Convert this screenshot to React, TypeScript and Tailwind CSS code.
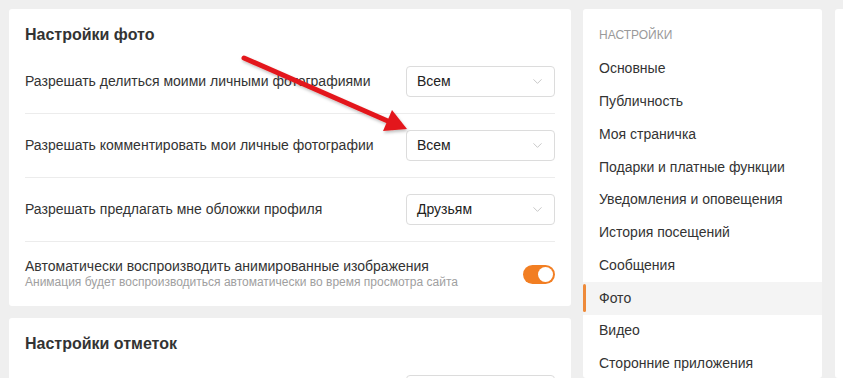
import { ChevronDown } from 'lucide-react';

const menu = [
  'Основные',
  'Публичность',
  'Моя страничка',
  'Подарки и платные функции',
  'Уведомления и оповещения',
  'История посещений',
  'Сообщения',
  'Фото',
  'Видео',
  'Сторонние приложения',
];

function Select({ value }: { value: string }) {
  return (
    <div className="flex h-[31px] w-[149px] shrink-0 items-center justify-between rounded-[4px] border border-[#dcdcdc] bg-white pl-[10px] pr-[9px] text-[14px] text-[#222]">
      <span>{value}</span>
      <ChevronDown size={15} strokeWidth={1.5} className="text-[#c4c4c4]" />
    </div>
  );
}

function SelectRow({ label, value }: { label: string; value: string }) {
  return (
    <div className="flex items-center justify-between border-b border-[#ececec] py-4">
      <span className="text-[14px] text-[#333]">{label}</span>
      <Select value={value} />
    </div>
  );
}

function Toggle() {
  return (
    <div className="flex h-[19px] w-[32px] shrink-0 items-center justify-end rounded-full bg-[#f27e22] pr-[2px]">
      <div className="h-[15px] w-[15px] rounded-full bg-white" />
    </div>
  );
}

function Arrow() {
  return (
    <svg
      className="pointer-events-none absolute left-0 top-0"
      width={843}
      height={378}
      viewBox="0 0 843 378"
    >
      <defs>
        <filter id="sh" x="-10%" y="-10%" width="120%" height="130%">
          <feDropShadow dx="1" dy="2" stdDeviation="1.5" floodColor="#000" floodOpacity="0.25" />
        </filter>
      </defs>
      <g filter="url(#sh)">
        <line x1={244} y1={58} x2={390} y2={122} stroke="#e3191b" strokeWidth={5} strokeLinecap="round" />
        <polygon points="407,129 383,131 392,110" fill="#e3191b" />
      </g>
    </svg>
  );
}

export default function App() {
  return (
    <div className="relative flex h-[378px] w-[843px] overflow-hidden bg-[#efefef] pl-[9px] pt-[9px] font-['Liberation_Sans',Arial,sans-serif]">
      {/* Main column */}
      <div className="flex w-[562px] shrink-0 flex-col gap-3">
        <div className="rounded-[3px] bg-white px-4 pt-[17px]">
          <h2 className="mb-[6px] text-[16px] font-bold leading-[18px] text-[#333]">Настройки фото</h2>
          <SelectRow label="Разрешать делиться моими личными фотографиями" value="Всем" />
          <SelectRow label="Разрешать комментировать мои личные фотографии" value="Всем" />
          <SelectRow label="Разрешать предлагать мне обложки профиля" value="Друзьям" />
          <div className="flex items-center justify-between pb-4 pt-4">
            <div className="flex flex-col">
              <span className="text-[14px] leading-[16px] text-[#333]">
                Автоматически воспроизводить анимированные изображения
              </span>
              <span className="text-[12px] leading-[16px] text-[#a0a0a0]">
                Анимация будет воспроизводиться автоматически во время просмотра сайта
              </span>
            </div>
            <Toggle />
          </div>
        </div>

        <div className="flex-1 rounded-[3px] bg-white px-4 pt-[17px]">
          <h2 className="mb-[6px] text-[16px] font-bold leading-[18px] text-[#333]">Настройки отметок</h2>
          <div className="flex justify-end pt-4">
            <div className="h-[31px] w-[149px] rounded-[4px] border border-[#dcdcdc]" />
          </div>
        </div>
      </div>

      {/* Settings menu */}
      <div className="ml-3 w-[239px] shrink-0 rounded-[3px] bg-white pt-[17px]">
        <div className="mb-[8.5px] pl-4 text-[12px] uppercase leading-[18px] text-[#9a9a9a]">Настройки</div>
        {menu.map((item) => {
          const active = item === 'Фото';
          return (
            <div
              key={item}
              className={`relative flex h-[32.75px] items-center pl-4 text-[14px] text-[#333] ${
                active ? 'bg-[#f4f4f4]' : ''
              }`}
            >
              {active && (
                <span className="absolute left-0 top-[2px] h-[28px] w-[3px] rounded-full bg-[#ee8a3a]" />
              )}
              {item}
            </div>
          );
        })}
      </div>

      <div className="ml-[13px] w-[40px] shrink-0 rounded-[3px] bg-white" />

      <Arrow />
    </div>
  );
}
